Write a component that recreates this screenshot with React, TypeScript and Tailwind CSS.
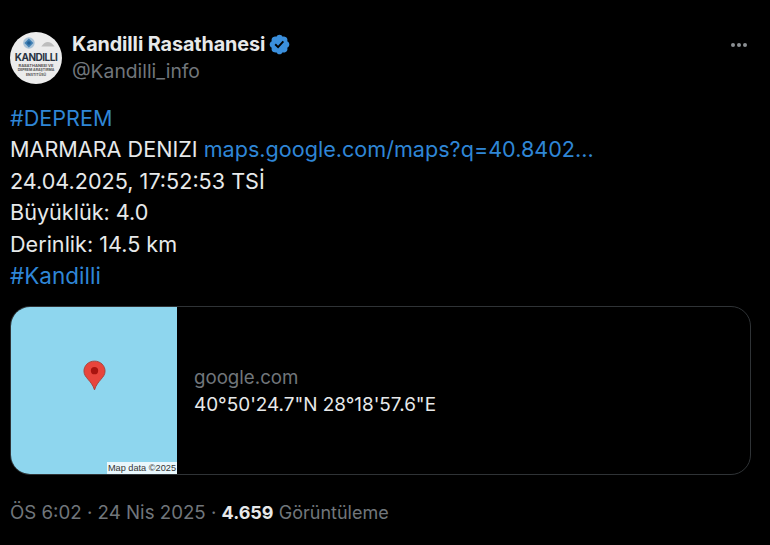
const font = { fontFamily: 'Inter, "Noto Sans", sans-serif' };

const Avatar = () => (
  <div className="w-[52px] h-[52px] rounded-full bg-[#ececec] overflow-hidden flex flex-col items-center shrink-0">
    <svg width="44" height="16" viewBox="0 0 44 18" className="mt-[3px] shrink-0">
      <circle cx="14" cy="9" r="6.5" fill="#a9c3d8" />
      <path d="M14 4 L19 9 L14 14 L9 9 Z" fill="#3f7fb3" />
      <circle cx="14" cy="9" r="2" fill="#1f5f96" />
      <path d="M28 13 Q35 3 43 13 Z" fill="#bdbdbd" />
    </svg>
    <span className="text-[10px] leading-[12px] font-bold text-[#2a3442] tracking-tighter">KANDILLI</span>
    <span className="text-[4px] leading-[5px] font-bold text-[#555]">RASATHANESI VE</span>
    <span className="text-[3.5px] leading-[5px] font-bold text-[#555]">DEPREM ARAŞTIRMA</span>
    <span className="text-[3.5px] leading-[5px] font-bold text-[#555]">ENSTITÜSÜ</span>
  </div>
);

const VerifiedBadge = () => (
  <svg viewBox="0 0 22 22" className="w-[23px] h-[23px] text-[#3b8fdc]" fill="currentColor">
    <path d="M20.396 11c-.018-.646-.215-1.275-.57-1.816-.354-.54-.852-.972-1.438-1.246.223-.607.27-1.264.14-1.897-.131-.634-.437-1.218-.882-1.687-.47-.445-1.053-.75-1.687-.882-.633-.13-1.29-.083-1.897.14-.273-.587-.704-1.086-1.245-1.44S11.647 1.62 11 1.604c-.646.017-1.273.213-1.813.568s-.969.854-1.24 1.44c-.608-.223-1.267-.272-1.902-.14-.635.13-1.22.436-1.69.882-.445.47-.749 1.055-.878 1.688-.13.633-.08 1.29.144 1.896-.587.274-1.087.705-1.443 1.245-.356.54-.555 1.17-.574 1.817.02.647.218 1.276.574 1.817.356.54.856.972 1.443 1.245-.224.606-.274 1.263-.144 1.896.13.634.433 1.218.877 1.688.47.443 1.054.747 1.687.878.633.132 1.29.084 1.897-.136.274.586.705 1.084 1.246 1.439.54.354 1.17.551 1.816.569.647-.016 1.276-.213 1.817-.567s.972-.854 1.245-1.44c.604.239 1.266.296 1.903.164.636-.132 1.22-.447 1.68-.907.46-.46.776-1.044.908-1.681s.075-1.299-.165-1.903c.586-.274 1.084-.705 1.439-1.246.354-.54.551-1.17.569-1.816zM9.662 14.85l-3.429-3.428 1.293-1.302 2.072 2.072 4.4-4.794 1.347 1.246z" />
  </svg>
);

const Pin = () => (
  <svg width="23" height="31" viewBox="0 0 24 32">
    <path d="M12 1 C5.5 1 1 5.8 1 11.5 C1 18.5 9 21 12 31 C15 21 23 18.5 23 11.5 C23 5.8 18.5 1 12 1 Z" fill="#e8453c" stroke="#a8443c" strokeWidth="1" />
    <circle cx="12" cy="11" r="3.8" fill="#a8140f" />
  </svg>
);

export default function App() {
  return (
    <div className="w-[770px] h-[545px] bg-black text-[#e7e9ea] overflow-hidden pl-[10px] pr-[19px] pt-[32px]" style={font}>
      <div className="flex items-start">
        <Avatar />
        <div className="ml-[10px] flex-1">
          <div className="flex items-center gap-[3px] h-[24px]">
            <span className="text-[19.8px] font-bold leading-[24px] tracking-[-0.1px]">Kandilli Rasathanesi</span>
            <VerifiedBadge />
          </div>
          <div className="text-[19.3px] leading-[26px] text-[#71767b] mt-[2px]">@Kandilli_info</div>
        </div>
        <div className="flex gap-[2px] mt-[11px] mr-[4px]">
          <span className="w-[4px] h-[4px] rounded-full bg-[#8b8f93]" />
          <span className="w-[4px] h-[4px] rounded-full bg-[#8b8f93]" />
          <span className="w-[4px] h-[4px] rounded-full bg-[#8b8f93]" />
        </div>
      </div>

      <div className="mt-[19px] text-[21.6px] leading-[31.4px]">
        <div className="text-[#2f86d6]">#DEPREM</div>
        <div>
          MARMARA DENIZI <span className="text-[#2f86d6]">maps.google.com/maps?q=40.8402...</span>
        </div>
        <div>24.04.2025, 17:52:53 TSİ</div>
        <div>Büyüklük: 4.0</div>
        <div>Derinlik: 14.5 km</div>
        <div className="text-[#2f86d6] text-[22.5px]">#Kandilli</div>
      </div>

      <div className="mt-[15px] h-[169px] flex rounded-[20px] border border-[#2f3336] overflow-hidden">
        <div className="relative w-[166px] bg-[#8ed6ee] flex justify-center pt-[53px] shrink-0">
          <div className="h-[31px]"><Pin /></div>
          <span className="absolute right-0 bottom-0 bg-white/80 text-[9.2px] leading-[12px] px-[1px] text-[#333]" style={{ fontFamily: '"Liberation Sans", sans-serif' }}>Map data ©2025</span>
        </div>
        <div className="flex-1 flex flex-col justify-center pl-[17px]">
          <div className="text-[18.7px] leading-[27px] text-[#71767b]">google.com</div>
          <div className="text-[18.9px] leading-[27px]">40°50'24.7"N 28°18'57.6"E</div>
        </div>
      </div>

      <div className="mt-[26px] text-[18.7px] leading-[24px] text-[#71767b]">
        ÖS 6:02 · 24 Nis 2025 · <span className="font-bold text-[#e7e9ea] text-[18px]">4.659</span> <span className="text-[18px]">Görüntüleme</span>
      </div>
    </div>
  );
}
